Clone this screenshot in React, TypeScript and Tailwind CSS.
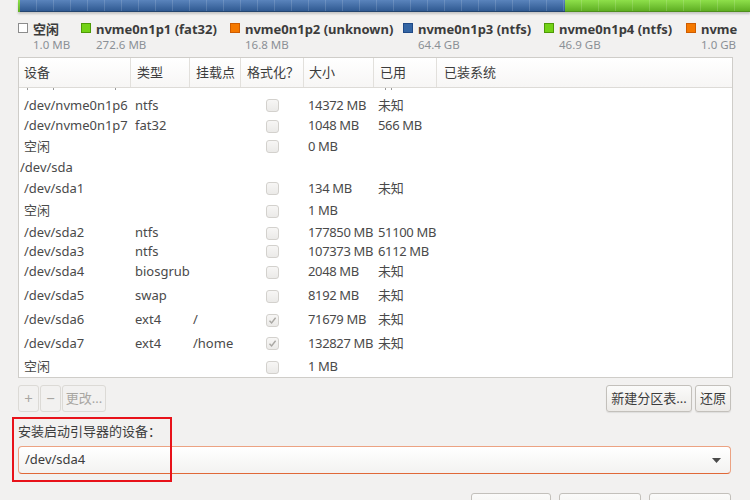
import React from "react";

type Row = {
  dev: string;
  type?: string;
  mount?: string;
  size?: string;
  used?: string;
  h: string;
  parent?: boolean;
  checked?: boolean;
};

const rows: Row[] = [
  { dev: "/dev/nvme0n1p6", type: "ntfs", size: "14372 MB", used: "未知", h: "h-[21px]" },
  { dev: "/dev/nvme0n1p7", type: "fat32", size: "1048 MB", used: "566 MB", h: "h-[20px]" },
  { dev: "空闲", size: "0 MB", h: "h-[21px]" },
  { dev: "/dev/sda", h: "h-[21px]", parent: true },
  { dev: "/dev/sda1", size: "134 MB", used: "未知", h: "h-[21px]" },
  { dev: "空闲", size: "1 MB", h: "h-[24px]" },
  { dev: "/dev/sda2", type: "ntfs", size: "177850 MB", used: "51100 MB", h: "h-[20px]" },
  { dev: "/dev/sda3", type: "ntfs", size: "107373 MB", used: "6112 MB", h: "h-[17px]" },
  { dev: "/dev/sda4", type: "biosgrub", size: "2048 MB", used: "未知", h: "h-[24px]" },
  { dev: "/dev/sda5", type: "swap", size: "8192 MB", used: "未知", h: "h-[24px]" },
  { dev: "/dev/sda6", type: "ext4", mount: "/", size: "71679 MB", used: "未知", h: "h-[24px]", checked: true },
  { dev: "/dev/sda7", type: "ext4", mount: "/home", size: "132827 MB", used: "未知", h: "h-[23px]", checked: true },
  { dev: "空闲", size: "1 MB", h: "h-[24px]" },
];

const legend = [
  { name: "空闲", size: "1.0 MB", swatch: "bg-white border-[#8c8c8c]", w: "w-[63px]" },
  { name: "nvme0n1p1 (fat32)", size: "272.6 MB", swatch: "bg-[#73d216] border-[#4e9a06]", w: "w-[149px]" },
  { name: "nvme0n1p2 (unknown)", size: "16.8 MB", swatch: "bg-[#f57900] border-[#ce5c00]", w: "w-[173px]" },
  { name: "nvme0n1p3 (ntfs)", size: "64.4 GB", swatch: "bg-[#3465a4] border-[#204a87]", w: "w-[141px]" },
  { name: "nvme0n1p4 (ntfs)", size: "46.9 GB", swatch: "bg-[#73d216] border-[#4e9a06]", w: "w-[142px]" },
  { name: "nvme", size: "1.0 GB", swatch: "bg-[#f57900] border-[#ce5c00]", w: "w-[80px]" },
];

const headers = [
  { label: "设备", cls: "w-[112px] pl-[5px]" },
  { label: "类型", cls: "w-[59px] pl-[6px]" },
  { label: "挂载点", cls: "w-[51px] pl-[6px]" },
  { label: "格式化？", cls: "w-[63px] pl-[6px]" },
  { label: "大小", cls: "w-[70px] pl-[5px]" },
  { label: "已用", cls: "w-[63px] pl-[6px]" },
  { label: "已装系统", cls: "flex-1 pl-[7px]" },
];

const Check = ({ checked }: { checked?: boolean }) => (
  <span className="flex h-[13px] w-[13px] items-center justify-center rounded-[3px] border border-[#d3d1cd] bg-gradient-to-b from-[#f7f6f5] to-[#ebeae8]">
    {checked && (
      <svg width="9" height="9" viewBox="0 0 9 9">
        <path d="M1.5 4.8 L3.6 7 L7.6 1.8" fill="none" stroke="#a9a7a3" strokeWidth="1.4" />
      </svg>
    )}
  </span>
);

const BarSegment = ({ cls }: { cls: string }) => (
  <div className={`h-full ${cls}`}>
    <div className="h-full w-full bg-[repeating-linear-gradient(90deg,transparent_0,transparent_16px,rgba(255,255,255,0.14)_16px,rgba(255,255,255,0.14)_17px)]" />
  </div>
);

// bottoms of the glyphs of the row scrolled out above
const Dot = ({ cls }: { cls: string }) => <span className={`h-[2px] w-[1px] bg-[#9a9a9a] ${cls}`} />;

export default function App() {
  return (
    <div className="relative h-[500px] w-[750px] overflow-hidden bg-[#f2f1f0] font-['Noto_Sans','Noto_Sans_CJK_SC',sans-serif] text-[13px] text-[#3c3c3c]">
      <div className="pl-[18px]">
        <div className="flex h-[12px] shadow-[0_2px_2px_rgba(0,0,0,0.18)]">
          <BarSegment cls="w-[2px] bg-gradient-to-b from-[#8ee04a] to-[#5fae22]" />
          <BarSegment cls="w-[545px] bg-gradient-to-b from-[#5a84bc] to-[#305a92] border-b border-[#24456f]" />
          <BarSegment cls="flex-1 bg-gradient-to-b from-[#8ee04a] to-[#5fae22] border-b border-[#4e8f1c]" />
        </div>
      </div>

      <div className="mt-[9px] flex pl-[18px]">
        {legend.map((l, i) => (
          <div key={i} className={`flex shrink-0 gap-[5px] ${l.w}`}>
            <span className={`mt-[2px] h-[10px] w-[10px] shrink-0 border ${l.swatch}`} />
            <div className="flex flex-col whitespace-nowrap">
              <span className="text-[13px] font-bold leading-[16px] text-[#3c3c3c]">{l.name}</span>
              <span className="text-[11.5px] leading-[15px] text-[#8b9096]">{l.size}</span>
            </div>
          </div>
        ))}
      </div>

      <div className="mx-[18px] mt-[5px] flex h-[321px] w-[715px] flex-col border border-[#cfcdc9] bg-white">
        <div className="flex h-[30px] shrink-0 border-b border-[#dddbd7] bg-gradient-to-b from-white to-[#f7f6f5]">
          {headers.map((h, i) => (
            <div
              key={i}
              className={`flex h-full shrink-0 items-center ${h.cls} ${i < headers.length - 1 ? "border-r border-[#e2e0dc]" : ""}`}
            >
              {h.label}
            </div>
          ))}
        </div>
        <div className="flex-1 overflow-hidden text-[#4a4a4a]">
          <div className="flex h-[7px] items-start">
            <Dot cls="ml-[8px]" />
            <Dot cls="ml-[25px]" />
            <Dot cls="ml-[61px]" />
            <Dot cls="ml-[269px]" />
            <Dot cls="ml-[5px]" />
          </div>
          {rows.map((r, i) => (
            <div key={i} className={`flex items-center whitespace-nowrap ${r.h}`}>
              <div className={`w-[112px] shrink-0 ${r.parent ? "pl-[1px]" : "pl-[5px]"}`}>{r.dev}</div>
              <div className="w-[59px] shrink-0 pl-[4px]">{r.type}</div>
              <div className="w-[51px] shrink-0 pl-[3px]">{r.mount}</div>
              <div className="flex w-[63px] shrink-0 justify-center">{!r.parent && <Check checked={r.checked} />}</div>
              <div className="w-[70px] shrink-0 pl-[4px] tracking-[-0.35px]">{r.size}</div>
              <div className="w-[63px] shrink-0 pl-[4px] tracking-[-0.35px]">{r.used}</div>
            </div>
          ))}
        </div>
      </div>

      <div className="mx-[18px] mt-[7px] flex h-[27px] w-[713px] justify-between">
        <div className="flex gap-[1px] text-[#a8a6a2]">
          <div className="flex w-[21px] items-center justify-center rounded-[3px] border border-[#dcdad6] text-[15px]">+</div>
          <div className="flex w-[21px] items-center justify-center rounded-[3px] border border-[#dcdad6] text-[15px]">−</div>
          <div className="flex w-[44px] items-center justify-center rounded-[3px] border border-[#dcdad6]">更改...</div>
        </div>
        <div className="flex gap-[3px]">
          <button className="flex w-[86px] items-center justify-center rounded-[3px] border border-[#c3c0bb] bg-gradient-to-b from-[#fbfbfa] to-[#eceae7] shadow-[0_1px_1px_rgba(0,0,0,0.08)]">
            新建分区表...
          </button>
          <button className="flex w-[36px] items-center justify-center rounded-[3px] border border-[#c3c0bb] bg-gradient-to-b from-[#fbfbfa] to-[#eceae7] shadow-[0_1px_1px_rgba(0,0,0,0.08)]">
            还原
          </button>
        </div>
      </div>

      <div className="mt-[11px] pl-[18px] leading-[16px]">安装启动引导器的设备：</div>

      <div className="mx-[18px] mt-[7px] flex h-[28px] w-[713px] items-center justify-between rounded-[4px] border border-[#eca282] border-b-[#e06838] bg-gradient-to-b from-white to-[#f3f2f1] pl-[6px] pr-[9px]">
        <span>/dev/sda4</span>
        <svg width="9" height="5" viewBox="0 0 9 5">
          <path d="M0 0 H9 L4.5 5 Z" fill="#4a4a4a" />
        </svg>
      </div>

      <div className="mt-[19px] flex justify-end gap-[8px] pr-[19px]">
        <div className="h-[30px] w-[80px] rounded-[3px] border border-[#c3c0bb] bg-gradient-to-b from-[#fbfbfa] to-[#eceae7]" />
        <div className="h-[30px] w-[82px] rounded-[3px] border border-[#c3c0bb] bg-gradient-to-b from-[#fbfbfa] to-[#eceae7]" />
        <div className="h-[30px] w-[82px] rounded-[3px] border border-[#c3c0bb] bg-gradient-to-b from-[#fbfbfa] to-[#eceae7]" />
      </div>

      <div className="absolute left-[12px] top-[417px] h-[65px] w-[160px] border-2 border-[#e8121a]" />
    </div>
  );
}
